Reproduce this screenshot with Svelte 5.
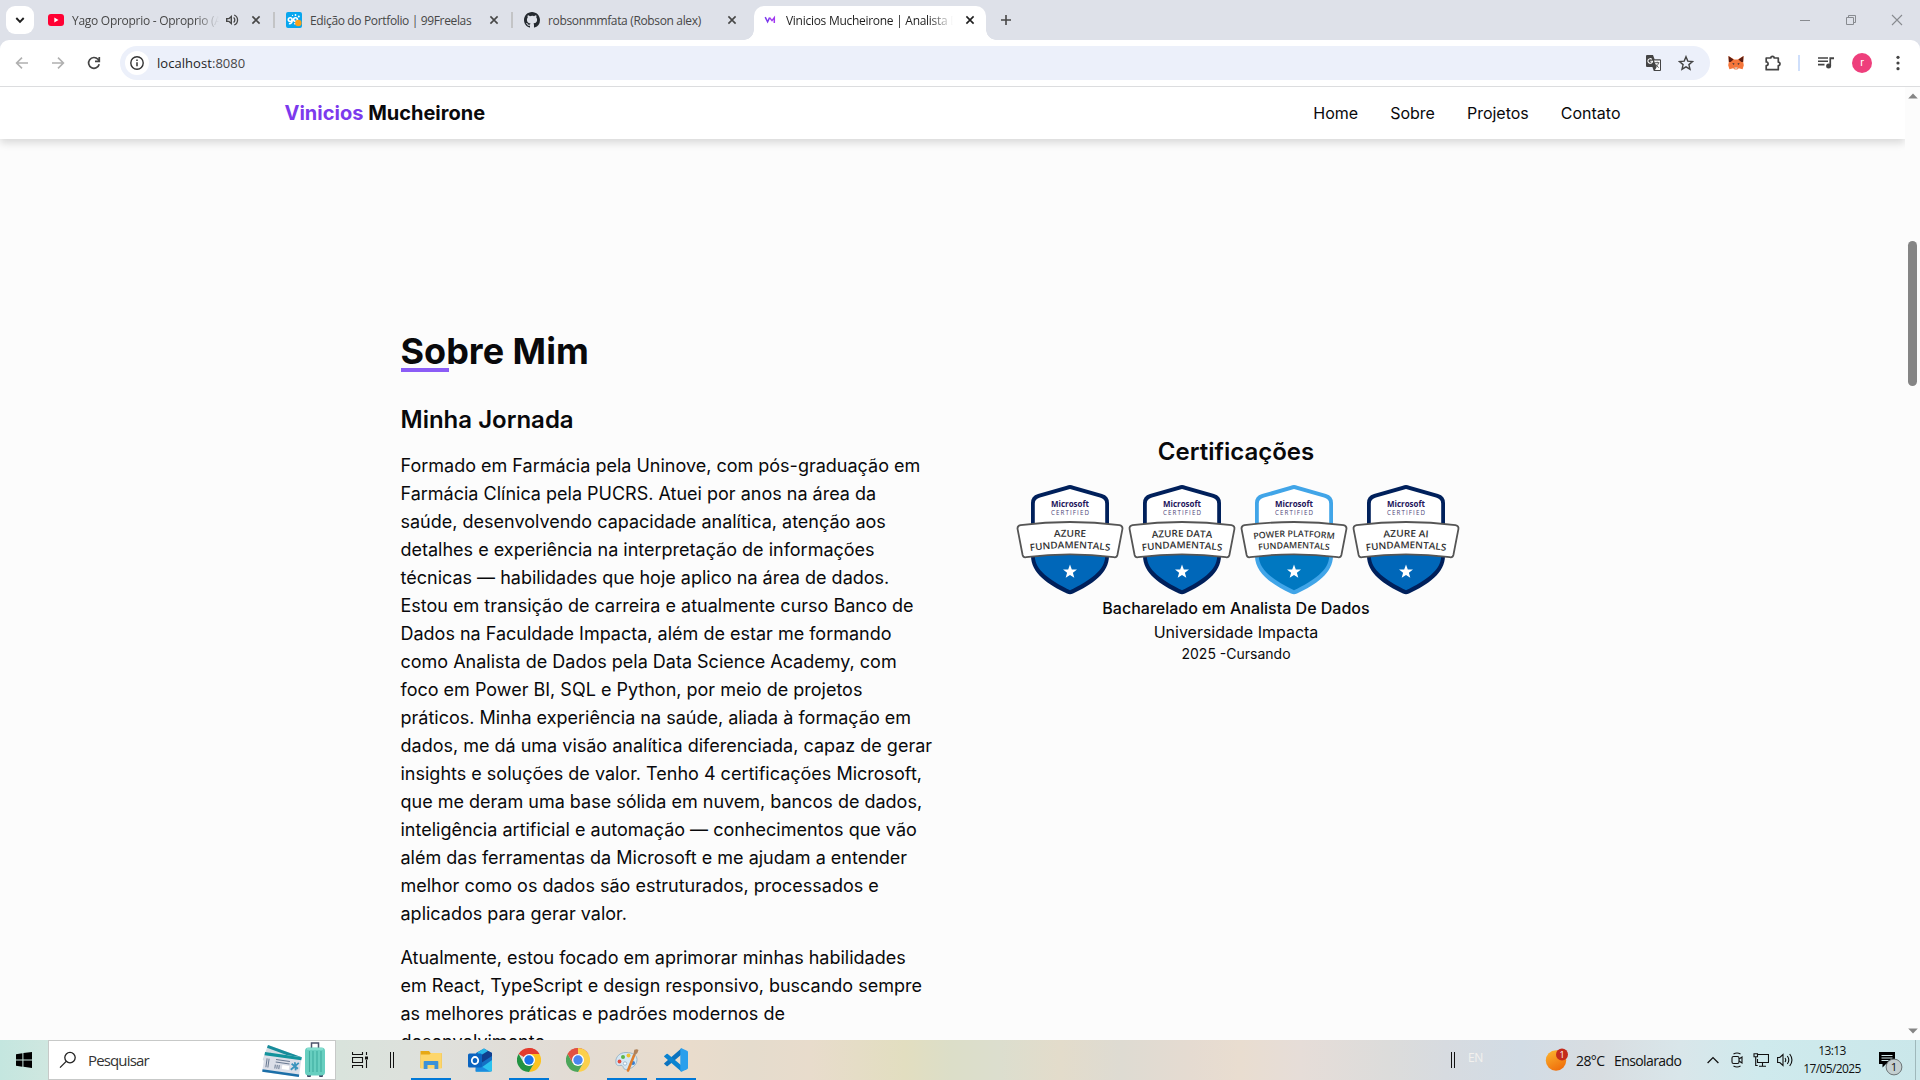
<script lang="ts">
  type Tab = { kind: string; title: string; audio?: boolean; active?: boolean; fade?: boolean };

  const tabs: Tab[] = [
    { kind: 'youtube', title: 'Yago Oproprio - Oproprio (Audio)', audio: true, fade: true },
    { kind: 'freelas', title: 'Edição do Portfolio | 99Freelas' },
    { kind: 'github', title: 'robsonmmfata (Robson alex)' },
    { kind: 'vm', title: 'Vinicios Mucheirone | Analista De Dados', active: true, fade: true },
  ];

  const links = ['Home', 'Sobre', 'Projetos', 'Contato'];

  const journey = [
    'Formado em Farmácia pela Uninove, com pós-graduação em',
    'Farmácia Clínica pela PUCRS. Atuei por anos na área da',
    'saúde, desenvolvendo capacidade analítica, atenção aos',
    'detalhes e experiência na interpretação de informações',
    'técnicas — habilidades que hoje aplico na área de dados.',
    'Estou em transição de carreira e atualmente curso Banco de',
    'Dados na Faculdade Impacta, além de estar me formando',
    'como Analista de Dados pela Data Science Academy, com',
    'foco em Power BI, SQL e Python, por meio de projetos',
    'práticos. Minha experiência na saúde, aliada à formação em',
    'dados, me dá uma visão analítica diferenciada, capaz de gerar',
    'insights e soluções de valor. Tenho 4 certificações Microsoft,',
    'que me deram uma base sólida em nuvem, bancos de dados,',
    'inteligência artificial e automação — conhecimentos que vão',
    'além das ferramentas da Microsoft e me ajudam a entender',
    'melhor como os dados são estruturados, processados e',
    'aplicados para gerar valor.',
  ];

  const focus = [
    'Atualmente, estou focado em aprimorar minhas habilidades',
    'em React, TypeScript e design responsivo, buscando sempre',
    'as melhores práticas e padrões modernos de',
    'desenvolvimento.',
  ];

  const badges = [
    { top: 'AZURE', width: 32, edge: '#00205b', fill: '#0067b9', size: 9.6, lower: 80 },
    { top: 'AZURE DATA', width: 60, edge: '#00205b', fill: '#0067b9', size: 9.6, lower: 80 },
    { top: 'POWER PLATFORM', width: 81, edge: '#41a5e8', fill: '#0078c1', size: 8.8, lower: 71 },
    { top: 'AZURE AI', width: 45, edge: '#00205b', fill: '#0067b9', size: 9.6, lower: 80 },
  ];
</script>

{#snippet chromeLogo(light: boolean)}
  <svg width="24" height="24" viewBox="0 0 24 24">
    <path d="M12 12 1.6 6A12 12 0 0 1 22.4 6Z" fill={light ? '#e25142' : '#e33b2e'} />
    <path d="M12 0a12 12 0 0 1 10.4 6H12Z" fill={light ? '#fbd04b' : '#e33b2e'} />
    <path d="M22.4 6A12 12 0 0 1 12 24L17.2 15 12 6Z" fill={light ? '#fbd04b' : '#fcc31e'} />
    <path d="M1.6 6A12 12 0 0 0 12 24l5.2-9H6.8Z" fill={light ? '#4ca65a' : '#229342'} />
    {#if light}<path d="M12 0A12 12 0 0 0 1.6 6l5.2 9L12 6Z" fill="#e25142" />{/if}
    <circle cx="12" cy="12" r="6" fill="#fff" />
    <circle cx="12" cy="12" r="4.7" fill={light ? '#4a86f0' : '#1a73e8'} />
  </svg>
{/snippet}

<div class="screen">
  <header class="tabstrip">
    <button class="tabsearch" aria-label="Pesquisar guias">
      <svg width="12" height="12" viewBox="0 0 12 12"><path d="m2.3 4 3.7 3.8L9.7 4" fill="none" stroke="#1f1f1f" stroke-width="1.9" /></svg>
    </button>
    {#each tabs as tab}
      <div class="tab" class:active={tab.active}>
        <span class="favicon">
          {#if tab.kind === 'youtube'}
            <svg width="16" height="16" viewBox="0 0 16 16"><rect y="2" width="16" height="12" rx="3" fill="#ff0033" /><path d="m6.3 5.5 4.2 2.5-4.2 2.5Z" fill="#fff" /></svg>
          {:else if tab.kind === 'freelas'}
            <svg width="16" height="16" viewBox="0 0 16 16">
              <rect width="16" height="16" rx="2" fill="#08a6ee" />
              <g fill="none" stroke="#fff" stroke-width="1.6"><circle cx="4.2" cy="7.6" r="1.9" /><circle cx="9.5" cy="7.6" r="1.9" /><path d="M6.1 7.6c.2 2.5-.6 4.2-3.2 4.2M11.4 7.6c.2 2.5-.6 4.2-3.2 4.2" /></g>
              <circle cx="12.3" cy="11" r="3.2" fill="#f9a11b" /><circle cx="9.5" cy="3" r=".9" fill="#fff" /><circle cx="12.8" cy="4.4" r="1" fill="#fff" /><circle cx="6.5" cy="3.4" r=".6" fill="#fff" />
            </svg>
          {:else if tab.kind === 'github'}
            <svg width="16" height="16" viewBox="0 0 16 16"><path fill="#24292f" d="M8 0C3.58 0 0 3.58 0 8c0 3.54 2.29 6.53 5.47 7.59.4.07.55-.17.55-.38 0-.19-.01-.82-.01-1.49-2.01.37-2.53-.49-2.69-.94-.09-.23-.48-.94-.82-1.13-.28-.15-.68-.52-.01-.53.63-.01 1.08.58 1.23.82.72 1.21 1.87.87 2.33.66.07-.52.28-.87.51-1.07-1.78-.2-3.64-.89-3.64-3.95 0-.87.31-1.59.82-2.15-.08-.2-.36-1.02.08-2.12 0 0 .67-.21 2.2.82A7.6 7.6 0 0 1 8 3.86c.68 0 1.36.09 2 .27 1.53-1.04 2.2-.82 2.2-.82.44 1.1.16 1.92.08 2.12.51.56.82 1.27.82 2.15 0 3.07-1.87 3.75-3.65 3.95.29.25.54.73.54 1.48 0 1.07-.01 1.93-.01 2.2 0 .21.15.46.55.38A8.01 8.01 0 0 0 16 8c0-4.42-3.58-8-8-8Z" /></svg>
          {:else}
            <svg width="16" height="16" viewBox="0 0 16 16" fill="none" stroke-width="1.5"><path d="M3.2 5.2 5.6 9.8l2-4.2" stroke="#7c3aed" /><path d="M7.6 5.6 10 8.6l2.300-3V11" stroke="#a23af0" /></svg>
          {/if}
        </span>
        <span class="title" class:fade={tab.fade} class:short={tab.audio}>{tab.title}</span>
        {#if tab.audio}
          <svg class="audio" width="14" height="14" viewBox="0 0 14 14"><path d="M1 5h2.6L7 2v10L3.6 9H1Z" fill="#474747" /><path d="M2.4 6.3h1.8L5.6 5v4L4.2 7.7H2.4Z" fill="#dee1e9" /><path d="M8.6 4.6a3 3 0 0 1 0 4.8M9.2 2a5.4 5.4 0 0 1 0 10" fill="none" stroke="#474747" stroke-width="1.3" /></svg>
        {/if}
        <svg class="close" width="10" height="10" viewBox="0 0 10 10"><path d="m1.400 1.400 7.200 7.200m0-7.200L1.400 8.600" fill="none" stroke={tab.active ? '#1f1f1f' : '#474747'} stroke-width="1.6" /></svg>
      </div>
    {/each}
    <svg class="newtab" width="12" height="12" viewBox="0 0 12 12"><path d="M6 1v10M1 6h10" stroke="#474747" stroke-width="1.6" /></svg>
    <div class="controls">
      <svg width="12" height="12" viewBox="0 0 12 12"><path d="M1 6.5h10" stroke="#888b90" /></svg>
      <svg width="12" height="12" viewBox="0 0 12 12" fill="none" stroke="#888b90"><path d="M1.5 3.5h7v7h-7ZM3.5 3.5v-2h7v7h-2" /></svg>
      <svg width="12" height="12" viewBox="0 0 12 12"><path d="m1 1 10 10M11 1 1 11" stroke="#888b90" stroke-width="1.1" /></svg>
    </div>
  </header>

  <div class="toolbar">
    <div class="history">
      <svg width="16" height="16" viewBox="0 0 16 16" fill="none" stroke="#b0b0b0" stroke-width="1.6"><path d="M14 8H3M8 2.6 2.6 8 8 13.4" /></svg>
      <svg width="16" height="16" viewBox="0 0 16 16" fill="none" stroke="#b0b0b0" stroke-width="1.6"><path d="M2 8h11M8 2.6 13.4 8 8 13.4" /></svg>
      <svg width="16" height="16" viewBox="0 0 16 16" fill="none" stroke="#444" stroke-width="1.7"><path d="M13.2 9.3A5.4 5.4 0 1 1 12 4.3L13.3 5.8M13.3 2v4.3H9" /></svg>
    </div>
    <div class="omnibox">
      <span class="info"><svg width="16" height="16" viewBox="0 0 16 16" fill="none" stroke="#333"><circle cx="8" cy="8" r="6.2" stroke-width="1.4" /><path d="M8 7.2v4M8 4.6v1.5" stroke-width="1.5" /></svg></span>
      <span class="url">localhost<i>:8080</i></span>
      <span class="actions">
        <svg width="18" height="18" viewBox="0 0 18 18"><path d="M2 1h6l1.6 4.3H15a1 1 0 0 1 1 1V16a1 1 0 0 1-1 1H8.8L7.4 13H2a1 1 0 0 1-1-1V2a1 1 0 0 1 1-1Z" fill="#444" /><path d="M9 6.4h6V16h-5l1.6-2.8Z" fill="#fff" /><path d="M6.8 5.3a2.3 2.3 0 1 0 .7 2H5.3" fill="none" stroke="#fff" stroke-width="1.1" /><path d="M9.8 8.7h4.5m-2.1-1v1M13.6 8.7c-.4 2-1.8 3.4-3.1 4.3m0-3c.7 1.6 2 2.8 3.3 3.6" fill="none" stroke="#555" stroke-width=".9" /></svg>
        <svg width="16" height="16" viewBox="0 0 16 16"><path d="m8 1.7 1.8 4.4 4.7.4-3.6 3.1 1.1 4.6L8 11.8l-4 2.4 1.1-4.6-3.6-3.1 4.7-.4Z" fill="none" stroke="#444" stroke-width="1.4" /></svg>
      </span>
    </div>
    <div class="extensions">
      <svg class="fox" width="16" height="16" viewBox="0 0 16 16"><path d="M.5 1 6.3 4.5h3.4L15.5 1l-.3 6 .6 3.2-1.2 4-3.8-1-1.5 1.2H6.7l-1.500-1.200-3.800 1-1.200-4L.8 7Z" fill="#f5763a" /><path d="m.5 1 5 3.6L2.7 7 .9 7ZM15.5 1l-5 3.6L13.3 7h1.8Z" fill="#5b1d12" /><path d="m4.2 8 2.3.5-.7 1.400ZM11.8 8l-2.300.5.7 1.400Z" fill="#34323a" /><path d="m6.4 12.3.5 1.7h2.200l.5-1.700Z" fill="#d8c0b0" /></svg>
      <svg class="puzzle" width="18" height="18" viewBox="0 0 18 18"><path d="M2.2 4h4.6a1.7 1.7 0 0 1 3.4 0h4.1v4.1a1.7 1.7 0 0 1 0 3.4v4.2H2.2v-4a1.9 1.9 0 0 0 0-3.8Z" fill="none" stroke="#444" stroke-width="1.7" stroke-linejoin="round" /></svg>
      <span class="divider"></span>
      <svg class="music" width="18" height="16" viewBox="0 0 18 16"><path d="M1 3h10M1 6.3h10M1 9.6h6.5" stroke="#444" stroke-width="1.6" /><path d="M12.4 2.2H17v2h-2.9V11h-1.7Z" fill="#444" /><circle cx="11.6" cy="11" r="2.5" fill="#444" /></svg>
      <span class="avatar">r</span>
      <svg class="more" width="4" height="16" viewBox="0 0 4 16" fill="#444"><circle cx="2" cy="2.3" r="1.6" /><circle cx="2" cy="8" r="1.6" /><circle cx="2" cy="13.7" r="1.6" /></svg>
    </div>
  </div>

  <div class="viewport">
    <div class="page">
      <nav class="sitenav">
        <strong class="brand"><em>Vinicios</em> Mucheirone</strong>
        <div class="links">{#each links as link}<span>{link}</span>{/each}</div>
      </nav>
      <section class="about">
        <div class="bio">
          <h1>Sobre Mim</h1>
          <h2>Minha Jornada</h2>
          <p>{#each journey as line}<span>{line}</span>{/each}</p>
          <p>{#each focus as line}<span>{line}</span>{/each}</p>
        </div>
        <div class="certs">
          <h2>Certificações</h2>
          <div class="badges">
            {#each badges as badge, i}
              <svg width="112" height="112" viewBox="0 0 112 112">
                <path d="M56 3Q57.500 3 60 4L88 12Q95 14 95 21V74C95 91 78 102.500 59 111.500Q56 113 53 111.500C34 102.500 17 91 17 74V21Q17 14 24 12L52 4Q54.500 3 56 3Z" fill={badge.edge} />
                <path d="M56 7 86 15.600Q91.200 17 91.200 21.500V50H20.800V21.500Q20.800 17 26 15.600Z" fill="#fff" />
                <path d="M20.800 70H91.200V74C91.200 88 76 98.500 56 108.300 36 98.500 20.800 88 20.800 74Z" fill={badge.fill} />
                <path d="M6.500 43.200Q56 36.800 105.500 43.200 109 44 108.400 47.200L103.400 73Q102.700 75.800 99.800 75.200 56 69.400 12.200 75.200 9.300 75.800 8.600 73L3.600 47.200Q3 44 6.500 43.200Z" fill="#fff" stroke="#555" stroke-width="1.8" />
                <path id="arc-top-{i}" d="M4 59Q56 50.400 108 59" fill="none" />
                <path id="arc-low-{i}" d="M4 70.800Q56 61.600 108 70.800" fill="none" />
                <text class="ms" x="56" y="24.800" textLength="38" lengthAdjust="spacingAndGlyphs">Microsoft</text>
                <text class="cert" x="56" y="33" textLength="38">CERTIFIED</text>
                <text class="band" font-size={badge.size} textLength={badge.width} lengthAdjust="spacingAndGlyphs"><textPath href="#arc-top-{i}" startOffset="50%" textLength={badge.width} lengthAdjust="spacingAndGlyphs">{badge.top}</textPath></text>
                <text class="band" font-size={badge.size} textLength={badge.lower} lengthAdjust="spacingAndGlyphs"><textPath href="#arc-low-{i}" startOffset="50%" textLength={badge.lower} lengthAdjust="spacingAndGlyphs">FUNDAMENTALS</textPath></text>
                <path d="m56 82.500 1.800 4.900 5.200.2-4.100 3.200 1.400 5-4.300-2.900-4.300 2.900 1.400-5-4.100-3.200 5.200-.2Z" fill="#fff" />
              </svg>
            {/each}
          </div>
          <p class="degree">Bacharelado em Analista De Dados</p>
          <p class="school">Universidade Impacta</p>
          <p class="period">2025 -Cursando</p>
        </div>
      </section>
    </div>
    <div class="scrollbar">
      <svg width="10" height="6" viewBox="0 0 10 6"><path d="M5 .5 9.800 5.500H.2Z" fill="#858585" /></svg>
      <span class="thumb"></span>
      <svg width="10" height="6" viewBox="0 0 10 6"><path d="M5 5.500 9.800.5H.2Z" fill="#858585" /></svg>
    </div>
  </div>

  <footer class="taskbar">
    <span class="start"><svg width="16" height="16" viewBox="0 0 16 16"><path d="M0 2.3 6.4 1.3V7.5H0ZM7.4 1.1 16 0V7.5H7.4ZM0 8.5h6.4v6.2L0 13.8ZM7.4 8.5H16V16l-8.6-1.2Z" /></svg></span>
    <div class="search">
      <svg width="18" height="18" viewBox="0 0 18 18" fill="none" stroke="#222" stroke-width="1.3"><circle cx="11" cy="6.6" r="5.2" /><path d="M7.2 10.4 1 16.6" /></svg>
      <span>Pesquisar</span>
      <svg class="travel" width="68" height="38" viewBox="0 0 68 38">
        <g transform="translate(7 4) rotate(20)"><rect width="36" height="16" rx="1" fill="#d3dde3" /><path d="M0 0h36v3H0Z" fill="#168c9b" /><path d="M5 7h12M5 10h18" stroke="#47607b" /></g>
        <g transform="translate(4 11) rotate(8)"><rect width="37" height="20" rx="1" fill="#dcdfe8" /><path d="M0 0h37v3.200H0Z" fill="#12939c" /><path d="M0 17.500h37V20H0Z" fill="#1c6fa8" /><path d="M3 6v9M5 6v9M12 6h14M12 8.500h14M12 11v4m2-4v4m2-4v4" stroke="#6a7a92" stroke-width="1" /><path d="M19 10.500h7v4h-7Z" fill="#fff" /><path d="m28 14 7-8M28 8l7 4m-4-6 2 8" stroke="#3a94bd" stroke-width="1.800" /></g>
        <path d="M50.500 8V2h7v6" fill="none" stroke="#4d536b" stroke-width="1.500" /><rect x="46" y="32" width="4" height="4" rx="1" fill="#3f4764" /><rect x="58" y="32" width="4" height="4" rx="1" fill="#3f4764" /><rect x="44" y="6.500" width="20" height="28" rx="3.500" fill="#68cfc0" /><path d="M48.500 10v21M52 10v21M56 10v21M60 10v21" stroke="#3fae9f" stroke-width="1.100" /><path d="M46 8h16" stroke="#a0eadd" />
      </svg>
    </div>
    <div class="tasktools">
      <svg width="16" height="16" viewBox="0 0 16 16" fill="none" stroke="#111" stroke-width="1.1"><path d="M.5 0v2.500h10V0M.5 16v-2.500h10V16M.5 5.500h10v5H.5ZM14.500 0v3M14.500 8v8" /><path d="M13 4.500h3v3h-3Z" fill="#111" stroke="none" /></svg>
      <svg width="5" height="16" viewBox="0 0 5 16" stroke="#111"><path d="M.5 0v16M3.500 0v16" /></svg>
    </div>
    <div class="apps">
      <span class="open"><svg width="24" height="24" viewBox="0 0 24 24"><path d="M1.500 3H10l1.500 2H22a.7.7 0 0 1 .7.7V20H1.500Z" fill="#e7a915" /><path d="M1.500 6.500h9L12 5h10.700v15.500H1.500Z" fill="#fdd66b" /><path d="M5.500 13h13a.8.8 0 0 1 .8.800V21h-3.800v-4h-7v4H4.700v-7.200a.8.8 0 0 1 .8-.8Z" fill="#3c92d8" /></svg></span>
      <span><svg width="24" height="24" viewBox="0 0 24 24"><path d="m8 5 8-4.500L24 5v17a1.500 1.500 0 0 1-1.500 1.500h-15Z" fill="#1470c4" /><path d="m10 4 6-3.500L20 3 9 12Z" fill="#28b6e8" /><path d="m20 3 4 2v3L10 17V9Z" fill="#113f8e" /><path d="M24 9v13a1.500 1.500 0 0 1-1.500 1.500H8L24 12Z" fill="#2bc2ef" /><path d="m8 15 14 8.500H8Z" fill="#1b8bdf" /><rect y="5.500" width="14" height="14" rx="1.500" fill="#0b64c0" /><ellipse cx="7" cy="12.500" rx="3.200" ry="3.500" fill="none" stroke="#fff" stroke-width="1.800" /></svg></span>
      <span class="open">{@render chromeLogo(false)}</span>
      <span>{@render chromeLogo(true)}</span>
      <span class="open"><svg width="24" height="24" viewBox="0 0 24 24"><path d="M11 4.500C4.500 4.500.8 9 .8 13.500c0 3.500 2 4.500 4 4 2-.6 3 0 3.500 2 .6 2 2.500 2.500 5.700 1.500 4.500-1.500 8-5 8-9.500s-4.500-7-11-7Z" fill="#d4e7f3" stroke="#8cabc2" stroke-width=".8" /><circle cx="4.500" cy="13.500" r="1.900" fill="#e34b3d" /><circle cx="8" cy="9" r="2" fill="#5cb548" /><circle cx="13.500" cy="7.500" r="2" fill="#f0c232" /><circle cx="18" cy="15" r="2" fill="#397fcf" /><circle cx="10" cy="15.500" r="1.700" fill="#fff" stroke="#86a5bd" stroke-width=".7" /><path d="m13 22.500 6-15" stroke="#df7e2e" stroke-width="2.600" stroke-linecap="round" /><path d="m18.300 7 1-5.200Q22 .5 23.500 2q-.5 3.500-3.800 5.500Z" fill="#b18259" /></svg></span>
      <span class="open"><svg width="24" height="24" viewBox="0 0 24 24"><path d="M17.500.2v6.300L3.800 18a1 1 0 0 1-1.300 0L.5 16.300a.9.9 0 0 1 0-1.400Z" fill="#0b73bf" /><path d="M17.500 23.800v-6.300L3.800 6a1 1 0 0 0-1.300 0L.5 7.700a.9.9 0 0 0 0 1.400Z" fill="#0a83d0" /><path d="M17.500.2 23 2.800c.6.3 1 .8 1 1.500v15.400c0 .7-.4 1.200-1 1.500l-5.500 2.600q-1-.1-1.200-1.300V1.500Q16.500.3 17.500.2Z" fill="#2b9fec" /></svg></span>
    </div>
    <div class="tray">
      <svg class="bars" width="5" height="16" viewBox="0 0 5 16" stroke="#111"><path d="M.5 0v16M3.500 0v16" /></svg>
      <span class="lang">EN</span>
      <svg class="weather" width="24" height="24" viewBox="0 0 24 24"><defs><linearGradient id="sun" x1=".2" y1="0" x2=".7" y2="1"><stop offset="0" stop-color="#fbb12d" /><stop offset="1" stop-color="#ef6c0a" /></linearGradient></defs><circle cx="11" cy="12.500" r="10.200" fill="url(#sun)" /><circle cx="17" cy="6.500" r="6" fill="#c42b1c" /><text x="17" y="9.700">1</text></svg>
      <span class="temp">28°C</span>
      <span class="sky">Ensolarado</span>
      <svg class="chev" width="12" height="8" viewBox="0 0 12 8"><path d="m.6 7 5.400-5.400L11.400 7" fill="none" stroke="#111" stroke-width="1.300" /></svg>
      <svg class="cam" width="12" height="16" viewBox="0 0 12 16" fill="none" stroke="#111" stroke-width="1.100"><rect x="1" y="4.500" width="7" height="7" rx="1.500" /><path d="m8 7 3-2v6L8 9M2.500 2q3.500-2 7 0M2.500 14q3.500 2 7 0" /></svg>
      <svg class="net" width="16" height="14" viewBox="0 0 16 14" fill="none" stroke="#111" stroke-width="1.100"><path d="M5 1.500h10.500v8H4.500V6M9.500 9.500V13M6 13.200h7M1 .8h3.500v3H1ZM2.700 4v8.500h2" /></svg>
      <svg class="vol" width="17" height="14" viewBox="0 0 17 14" fill="none" stroke="#111" stroke-width="1.100"><path d="M.6 4.500h2.200L6 1.500v11L2.800 9.500H.6ZM8 5q1.500 2 0 4M10.300 3q3 4 0 8M12.700 1q4.500 6 0 12" /></svg>
      <div class="clock"><span>13:13</span><span>17/05/2025</span></div>
      <svg class="notes" width="26" height="26" viewBox="0 0 26 26"><path d="M1 1h16v12H8l-3.500 3.500V13H1Z" fill="#000" /><path d="M3.500 4.500h11M3.500 7h11M3.500 9.500h7" stroke="#cfe6e8" /><circle cx="16" cy="16" r="7.900" fill="#c4cfd0" stroke="#6b7375" /><text x="16" y="20">1</text></svg>
      <span class="peek"></span>
    </div>
  </footer>
</div>

<style>
  :global(body) { margin: 0; overflow: hidden; }
  .screen { width: 1920px; height: 1080px; display: flex; flex-direction: column; background: linear-gradient(#dee1e9 60px, #fcfcfc 60px); font-family: 'Open Sans', 'Noto Sans', sans-serif; overflow: hidden; }
  svg { display: block; flex: none; }
  span { white-space: nowrap; }

  .tabstrip { height: 40px; flex: none; display: flex; align-items: center; background: #dee1e9; }
  .tabsearch { width: 28px; height: 28px; margin: 0 2px 0 6px; padding: 0; border: 0; border-radius: 9px; background: #fff; display: grid; place-items: center; }
  .tab { width: 238px; height: 40px; box-sizing: border-box; padding-left: 12px; padding-right: 13px; display: flex; align-items: center; flex: none; position: relative; font-size: 12px; letter-spacing: -0.35px; color: #474747; }
  .tab:nth-of-type(-n + 2)::after { content: ''; position: absolute; right: -1px; top: 12px; width: 2px; height: 16px; background: #c3c4c6; }
  .tab .title { margin-left: 8px; flex: 1; min-width: 0; overflow: hidden; padding-top: 1px; }
  .tab .title.short { flex: 0 0 147px; letter-spacing: -0.28px; }
  .fade { mask-image: linear-gradient(90deg, #000 calc(100% - 24px), transparent); }
  .active .title { margin-right: 12px; letter-spacing: -0.28px; }
  .audio { margin-left: 6px; }
  .close { margin-left: auto; }
  .active { color: #1f1f1f; isolation: isolate; }
  .active::before { content: ''; position: absolute; z-index: -1; left: 4px; right: 2px; top: 6px; bottom: 0; border-radius: 10px 10px 0 0; background: #fff; }
  .active::after { content: ''; position: absolute; z-index: -1; left: -6px; right: -8px; bottom: 0; height: 10px; background: radial-gradient(circle at 0 0, transparent 9.5px, #fff 10px) left / 10px 10px no-repeat, radial-gradient(circle at 100% 0, transparent 9.5px, #fff 10px) right / 10px 10px no-repeat; }
  .newtab { margin-left: 12px; }
  .controls { margin-left: auto; margin-right: 17px; display: flex; gap: 34px; }

  .toolbar { height: 46px; flex: none; display: flex; align-items: center; background: #fff; border-bottom: 1px solid #dcdddf; border-radius: 9px 9px 0 0; }
  .history { display: flex; gap: 20px; margin-left: 14px; }
  .omnibox { width: 1590px; height: 34px; margin-left: 18px; border-radius: 17px; background: #ecf0fa; display: flex; align-items: center; flex: none; }
  .info { width: 24px; height: 24px; margin-left: 5px; border-radius: 50%; background: #fff; display: grid; place-items: center; }
  .url { margin-left: 8px; font-size: 13px; letter-spacing: 0.05px; color: #1f1f1f; }
  .url i { font-style: normal; color: #474747; }
  .actions { margin-left: auto; margin-right: 16px; display: flex; gap: 15px; align-items: center; }
  .extensions { display: flex; align-items: center; }
  .fox { margin-left: 18px; }
  .puzzle { margin-left: 20px; }
  .divider { width: 2px; height: 16px; margin-left: 16px; background: #cfdffb; }
  .music { margin-left: 17px; }
  .avatar { width: 20px; height: 20px; margin-left: 17px; border-radius: 50%; background: #ee3f7c; color: #fff; font: 11px/19px Roboto, sans-serif; text-align: center; }
  .more { margin-left: 24px; }

  .viewport { height: 953px; flex: none; display: flex; background: #fcfcfc; overflow: hidden; font-family: Inter, sans-serif; color: #09090b; }
  .page { width: 1905px; flex: none; overflow: hidden; }
  .sitenav { height: 52px; box-sizing: border-box; padding: 0 284.5px; display: flex; align-items: center; justify-content: space-between; background: #fff; box-shadow: 0 4px 8px rgb(0 0 0 / 0.14); }
  .brand { font-size: 20px; font-weight: 700; line-height: 28px; }
  .brand em { font-style: normal; color: #7c3aed; }
  .links { display: flex; gap: 32px; font-size: 16px; line-height: 24px; }
  .about { display: flex; padding: 192px 0 0 400.5px; }
  .bio { width: 540px; flex: none; }
  h1 { margin: 0; width: max-content; font-size: 36px; line-height: 40px; font-weight: 700; position: relative; }
  h1::after { content: ''; position: absolute; left: 0; bottom: -1px; width: 48px; height: 4px; background: #8b5cf6; }
  h2 { margin: 0; font-size: 24px; line-height: 32px; font-weight: 600; }
  .bio h2 { margin: 33px 0 16px; }
  p { margin: 0; }
  .bio p { margin-bottom: 16px; font-size: 18px; line-height: 28px; }
  .bio p span { display: block; }
  .certs { width: 536px; margin-left: 27.5px; padding-top: 105px; display: flex; flex-direction: column; align-items: center; }
  .badges { display: flex; margin: 14px 0 2px 3px; }
  .badges svg { overflow: visible; }
  .ms { font: 700 8.5px 'Open Sans', sans-serif; fill: #23145a; text-anchor: middle; }
  .cert { font: 6.2px 'Open Sans', sans-serif; fill: #4d4377; text-anchor: middle; }
  .band { font-family: 'Open Sans', sans-serif; font-weight: 600; fill: #333; text-anchor: middle; }
  .degree { font-size: 16px; line-height: 24px; font-weight: 500; }
  .school { font-size: 16px; line-height: 24px; }
  .period { font-size: 14px; line-height: 20px; }
  .scrollbar { width: 15px; box-sizing: border-box; display: flex; flex-direction: column; align-items: center; padding: 6px 0; background: #fcfcfc; }
  .thumb { width: 9px; height: 145px; margin: 142px 0 auto; border-radius: 5px; background: #858585; }

  .taskbar { height: 40px; flex: none; display: flex; align-items: center; background: linear-gradient(90deg, #c4e6df 0, #cfe7e0 48px, #d9e3dc 340px, #dfe0dc 440px, #e2dcd5 560px, #e9dccc 690px, #e5dccd 750px, #e8dccc 810px, #e2dec0 905px, #dcdec8 950px, #dcdece 1000px, #e3dccb 1060px, #dedbd2 1120px, #e5dbd1 1190px, #e9ddd0 1240px, #e6ddd8 1300px, #dcdcdb 1390px, #d7dbe0 1445px, #d2dce5 1520px, #d8dde1 1600px, #d9e6ea 1680px, #cfeaed 1760px, #cae7ea 1920px); color: #111; }
  .start { width: 48px; display: grid; place-items: center; }
  .search { width: 288px; height: 40px; box-sizing: border-box; border: 1px solid #c7c9c8; background: #fff; display: flex; align-items: center; padding-left: 10px; font-size: 15px; color: #333; }
  .search span { margin-left: 11px; letter-spacing: -0.85px; }
  .travel { margin-left: auto; margin-right: 6px; }
  .tasktools { display: flex; gap: 22px; margin-left: 16px; }
  .apps { display: flex; gap: 9px; margin-left: 16px; }
  .apps span { width: 40px; height: 40px; display: grid; place-items: center; position: relative; }
  .apps .open::after { content: ''; position: absolute; left: 0; right: 0; bottom: 0; height: 2px; background: #0078d7; }
  .tray { margin-left: auto; height: 40px; display: flex; align-items: center; width: 469px; flex: none; font-size: 14px; box-sizing: border-box; }
  .lang { width: 15px; margin-left: 12px; padding-bottom: 6px; font-size: 12px; letter-spacing: -0.4px; color: #f3f1ee; }
  .weather { margin-left: 62px; }
  .weather text { font: 9px 'Open Sans', sans-serif; fill: #fff; text-anchor: middle; }
  .temp { width: 28px; margin-left: 7px; letter-spacing: -0.6px; }
  .sky { width: 68px; margin-left: 10px; letter-spacing: -0.6px; }
  .chev { margin-left: 25px; }
  .cam { margin-left: 12px; }
  .net { margin-left: 10px; }
  .vol { margin-left: 8px; }
  .clock { width: 60px; margin-left: 8px; display: flex; flex-direction: column; align-items: center; font-size: 12px; line-height: 18px; letter-spacing: -0.6px; }
  .notes { margin: 7px 0 0 16px; }
  .notes text { font: 11.5px 'Open Sans', sans-serif; fill: #111; text-anchor: middle; }
  .peek { width: 1px; height: 40px; margin-left: 11px; background: #9fb8bb; }
</style>
